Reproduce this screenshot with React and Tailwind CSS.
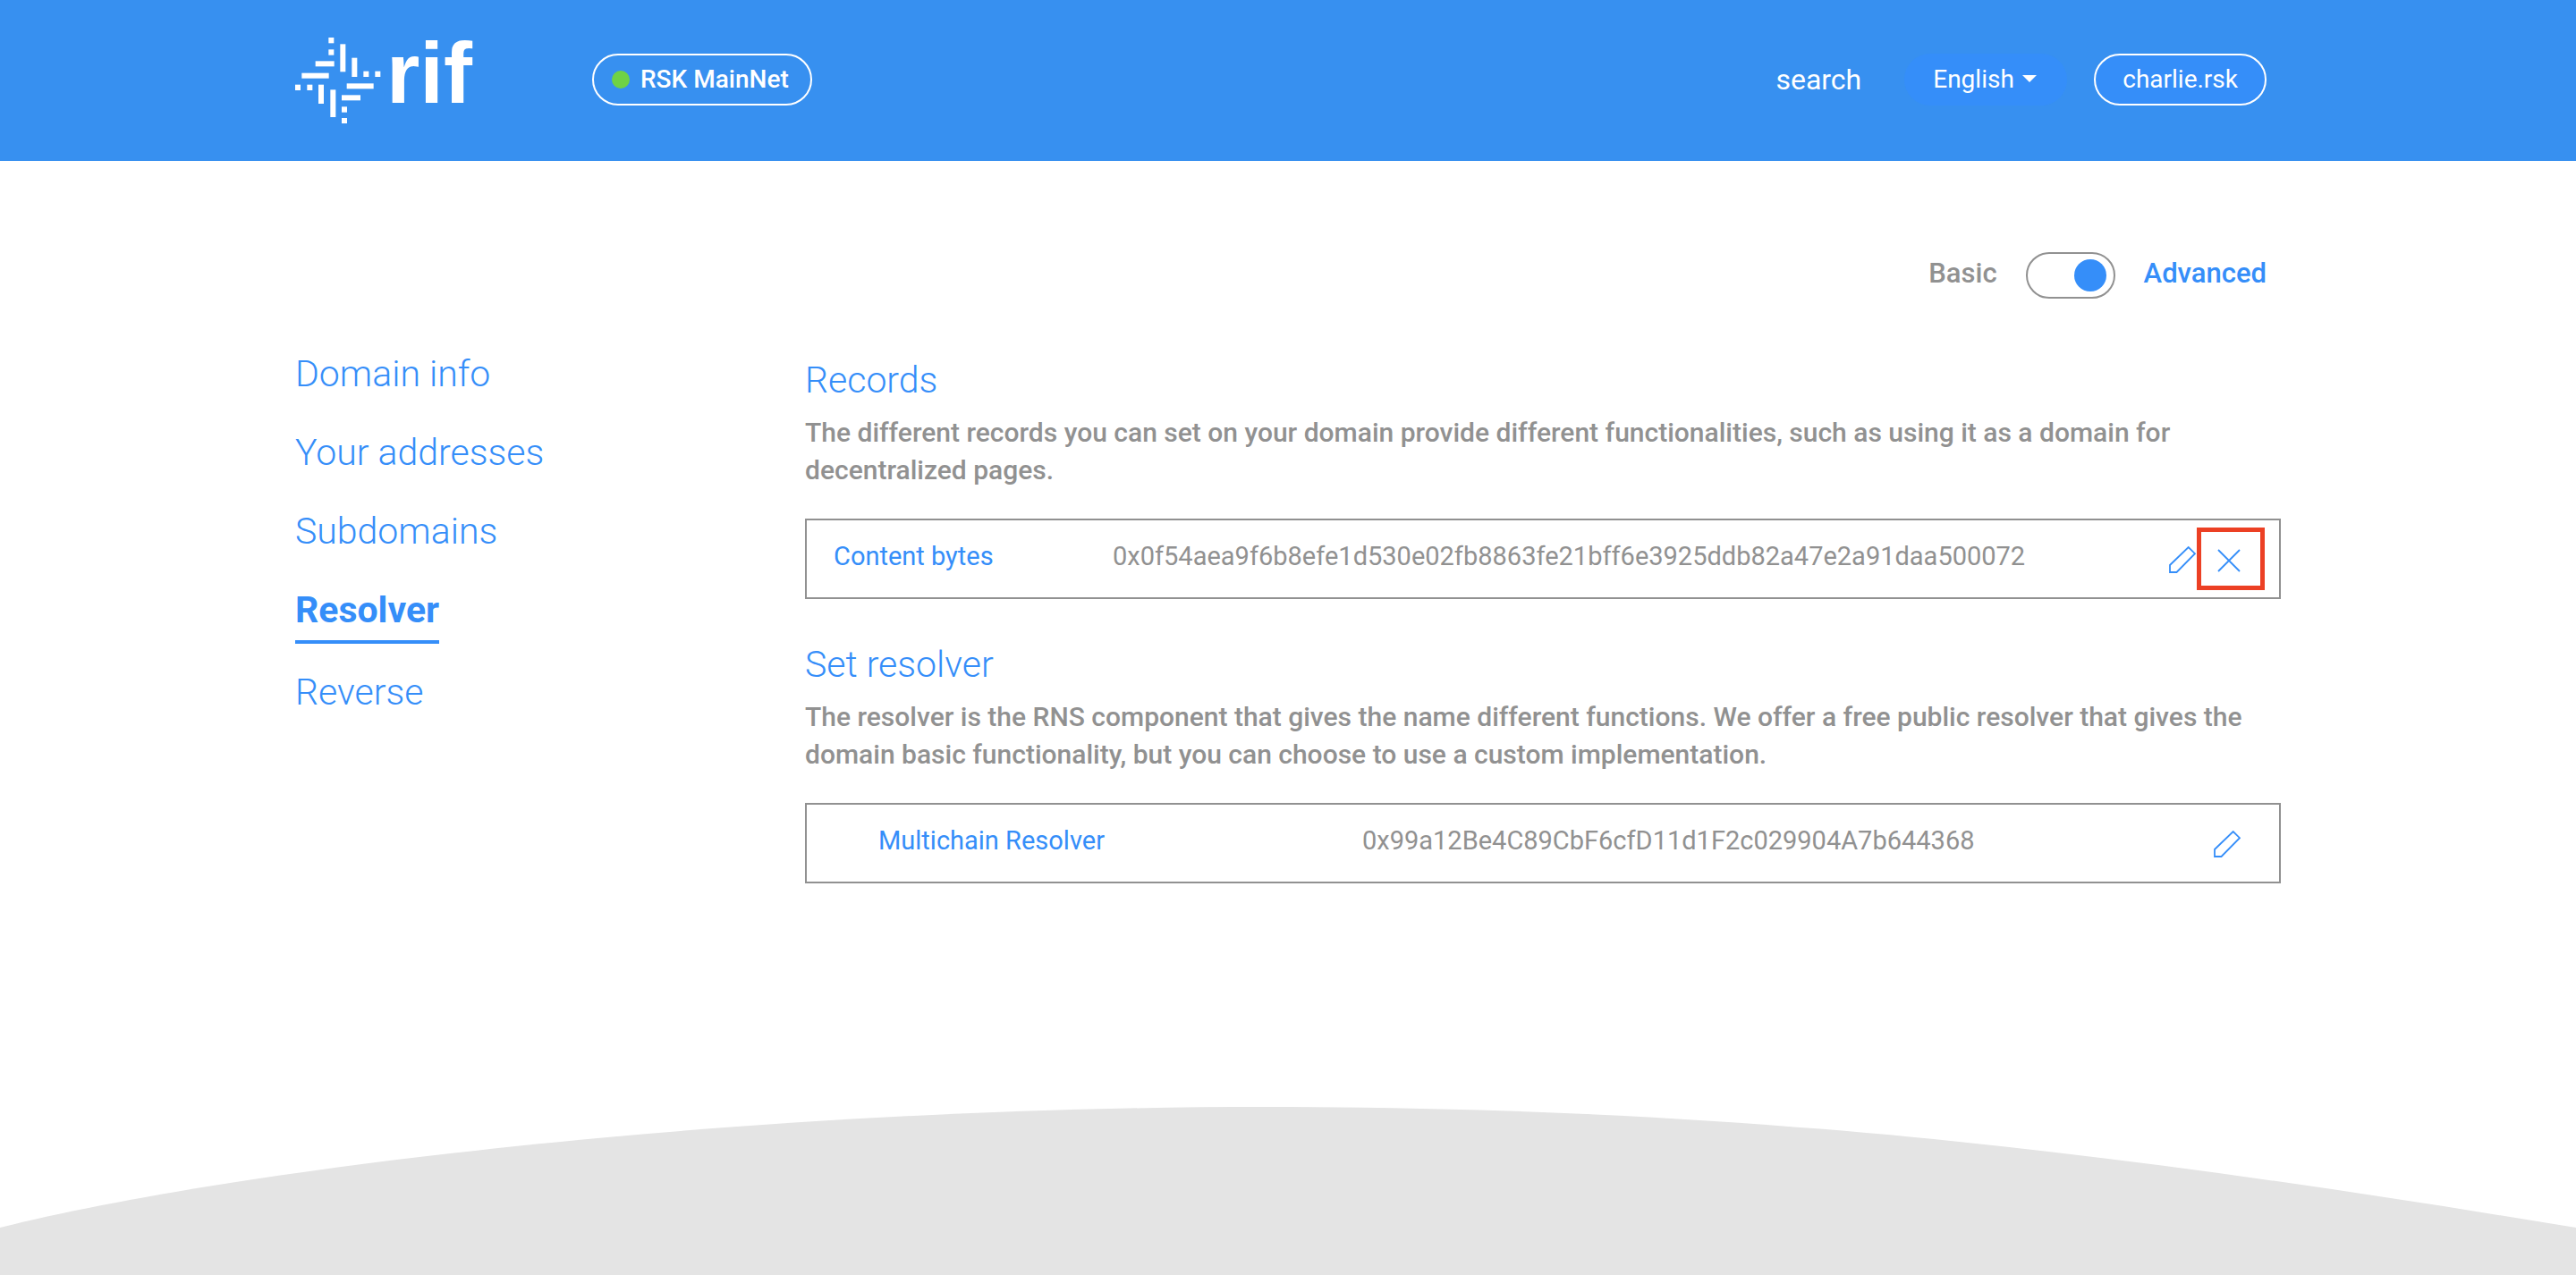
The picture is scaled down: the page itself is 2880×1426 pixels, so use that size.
const NAV_ITEMS = ["Domain info", "Your addresses", "Subdomains", "Resolver", "Reverse"];

const LOGO_BARS = [
  [172, 66, 18, 19], [172, 106, 18, 19], [289, 179, 18, 19], [328, 179, 18, 19],
  [60, 224, 18, 19], [100, 224, 18, 19], [216, 298, 18, 19], [216, 336, 18, 18],
  [128, 145, 63, 18], [82, 185, 91, 18], [233, 220, 90, 18], [216, 259, 63, 18],
  [211, 88, 18, 93], [250, 134, 18, 64], [138, 224, 18, 64], [178, 241, 18, 92],
];

function Logo() {
  return (
    <a href="#home" aria-label="rif" className="flex h-24 w-[202px] items-center gap-1.5">
      <svg viewBox="60 66 288 288" className="h-24 w-24 shrink-0" fill="white" aria-hidden="true">
        {LOGO_BARS.map(([x, y, w, h]) => (
          <rect key={`${x}-${y}`} x={x} y={y} width={w} height={h} />
        ))}
      </svg>
      <span className="pb-4 font-['Liberation_Sans',sans-serif] text-[96px] leading-[84px] font-bold">rif</span>
    </a>
  );
}

function PencilIcon() {
  return (
    <svg viewBox="0 0 30 30" className="size-[30px]" fill="none" stroke="currentColor" strokeWidth="1.8" aria-hidden="true">
      <path d="M1 29V21L21.7 1L29 8.2L8.500 29Z" />
    </svg>
  );
}

function CloseIcon() {
  return (
    <svg viewBox="0 0 26 26" className="size-[26px]" fill="none" stroke="currentColor" strokeWidth="1.8" aria-hidden="true">
      <path d="M1 1L25 25M25 1L1 25" />
    </svg>
  );
}

function Header() {
  return (
    <header className="bg-[#3790f0] text-white">
      <div className="mx-auto flex h-[180px] max-w-[2280px] items-start pr-[46px] pl-[30px] text-[28px]">
        <div className="pt-[42px]">
          <Logo />
        </div>
        <div className="mt-[60px] ml-[130px] flex h-[58px] items-center gap-3 rounded-full border-2 border-white pr-6 pl-5 font-medium">
          <span className="size-5 rounded-full bg-[#6fd245]" />
          RSK MainNet
        </div>
        <div className="ml-auto flex items-center pt-[60px]">
          <a href="#search" className="text-[32px]">search</a>
          <div className="relative ml-[48px]">
            <select
              aria-label="Language"
              defaultValue="English"
              className="h-[58px] w-[182px] appearance-none rounded-full bg-[#358ef9] pl-8"
            >
              <option>English</option>
            </select>
            <svg viewBox="0 0 16 8" className="pointer-events-none absolute top-6 right-[34px] h-2 w-4" fill="white" aria-hidden="true">
              <path d="M0 0H16L8 8Z" />
            </svg>
          </div>
          <button className="ml-[30px] h-[58px] rounded-full border-2 border-white bg-[#358ef9] px-[30px]">charlie.rsk</button>
        </div>
      </div>
    </header>
  );
}

function ModeSwitch() {
  return (
    <div className="flex h-[52px] items-center justify-end gap-8 pr-4 text-[31px] font-medium">
      <span className="pb-1 text-[#919191]">Basic</span>
      <input
        id="mode"
        type="checkbox"
        role="switch"
        defaultChecked
        className="flex h-[52px] w-[100px] appearance-none items-center rounded-full border-2 border-[#919191] px-2 before:size-9 before:rounded-full before:bg-[#358ef9] checked:justify-end"
      />
      <label htmlFor="mode" className="pb-1">Advanced</label>
    </div>
  );
}

function Sidebar() {
  return (
    <nav className="w-1/4 px-[30px] text-[41px] leading-[60px] font-light">
      <ul>
        {NAV_ITEMS.map((item) => (
          <li key={item} className="mb-6 flex">
            <a
              href={`#${item}`}
              className={item === "Resolver" ? "border-b-4 pb-1 font-bold" : "pb-1"}
            >
              {item}
            </a>
          </li>
        ))}
      </ul>
    </nav>
  );
}

function Section({ title, description, children }) {
  return (
    <section className="mb-12">
      <h2 className="text-[41px] leading-[50px] font-light">{title}</h2>
      <p className="mt-[13px] mb-[33px] text-[30px] leading-[42px] font-medium text-[#919191]">{description}</p>
      <div className="flex h-[90px] items-center border-2 border-[#919191] text-[29px] leading-[42px]">{children}</div>
    </section>
  );
}

export default function App() {
  return (
    <div className="flex min-h-screen flex-col bg-white font-['Roboto',sans-serif] text-[#358ef9]">
      <Header />
      <main className="mx-auto w-full max-w-[2280px] flex-1 pt-[102px]">
        <div className="px-[30px]">
          <ModeSwitch />
        </div>
        <div className="flex pt-[54px]">
          <Sidebar />
          <div className="w-3/4 px-[30px] pt-3">
            <Section
              title="Records"
              description="The different records you can set on your domain provide different functionalities, such as using it as a domain for decentralized pages."
            >
              <h3 className="w-[342px] pb-1.5 pl-[30px]">Content bytes</h3>
              <p className="pb-1.5 text-[#919191]">0x0f54aea9f6b8efe1d530e02fb8863fe21bff6e3925ddb82a47e2a91daa500072</p>
              <div className="ml-auto flex items-center gap-px pr-4">
                <button aria-label="Edit content bytes" className="pt-0.5"><PencilIcon /></button>
                <button aria-label="Delete content bytes" className="flex h-[70px] w-[76px] items-center justify-center border-[5px] border-[#ec4024] pt-1 pr-1">
                  <CloseIcon />
                </button>
              </div>
            </Section>
            <Section
              title="Set resolver"
              description="The resolver is the RNS component that gives the name different functions. We offer a free public resolver that gives the domain basic functionality, but you can choose to use a custom implementation."
            >
              <h3 className="w-[621px] pb-1.5 pl-20">Multichain Resolver</h3>
              <p className="pb-1.5 text-[#919191]">0x99a12Be4C89CbF6cfD11d1F2c029904A7b644368</p>
              <button aria-label="Edit resolver" className="mr-[43px] ml-auto pt-0.5"><PencilIcon /></button>
            </Section>
          </div>
        </div>
      </main>
      <footer>
        <svg viewBox="0 0 2880 188" preserveAspectRatio="none" className="block h-[188px] w-full" fill="#e4e4e4" aria-hidden="true">
          <path d="M0 135C250 72 820 0 1414 0C2000 0 2420 60 2880 135V188H0Z" />
        </svg>
      </footer>
    </div>
  );
}
